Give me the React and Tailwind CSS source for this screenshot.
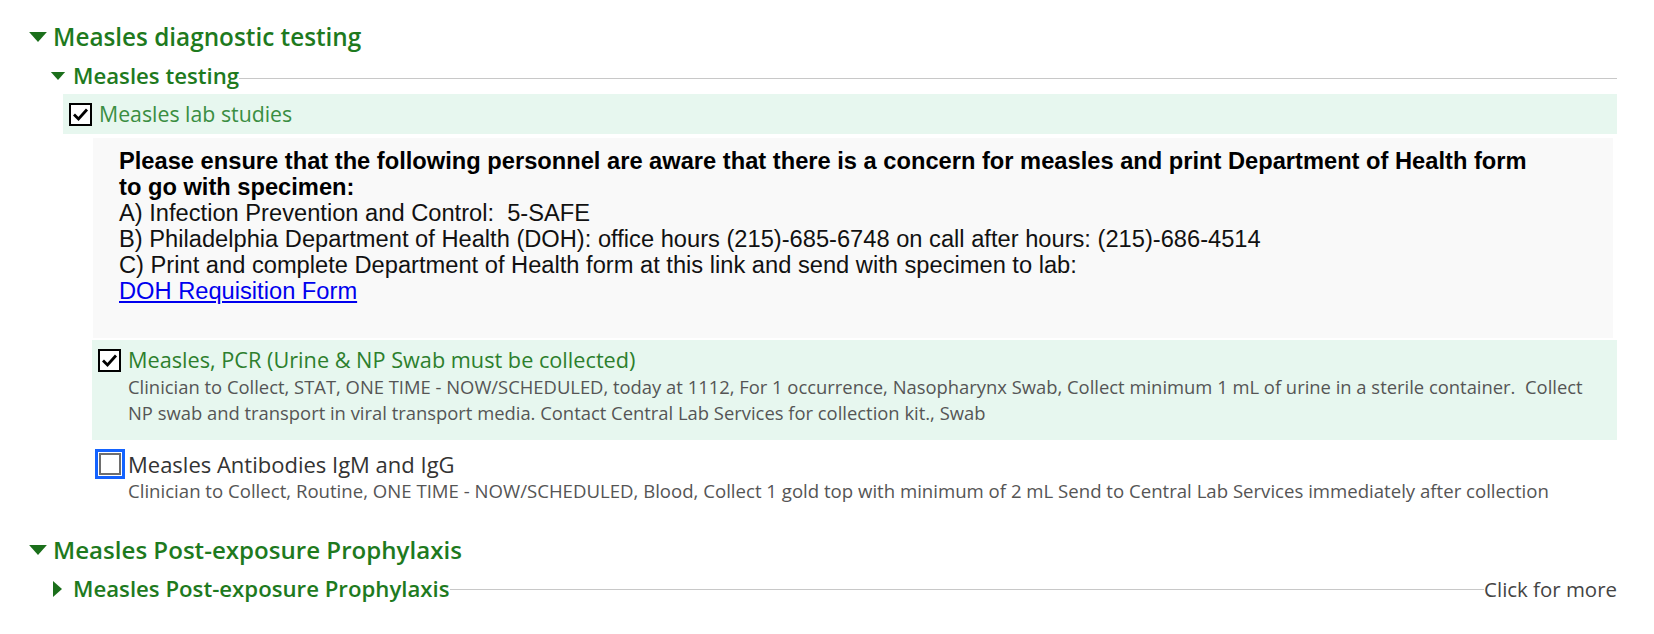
import React from "react";

const sans = { fontFamily: '"Open Sans", "Noto Sans", sans-serif' };
const arial = { fontFamily: '"Liberation Sans", Arial, sans-serif' };

function DownTri({ w, h }) {
  return (
    <svg width={w} height={h} viewBox="0 0 16 9" className="shrink-0">
      <polygon points="0,0 16,0 8,9" fill="#1b6f1b" />
    </svg>
  );
}

function RightTri() {
  return (
    <svg width="9" height="16" viewBox="0 0 9 16" className="shrink-0">
      <polygon points="0,0 9,8 0,16" fill="#1b6f1b" />
    </svg>
  );
}

function CheckBox({ checked }) {
  return (
    <div className="w-[23px] h-[23px] shrink-0 border-2 border-black bg-white flex items-center justify-center">
      {checked && (
        <svg width="17" height="15" viewBox="0 0 17 15">
          <polyline
            points="2,7.5 6.5,12 15,2.5"
            fill="none"
            stroke="#000"
            strokeWidth="2.8"
          />
        </svg>
      )}
    </div>
  );
}

export default function App() {
  return (
    <div
      className="w-[1654px] h-[634px] bg-white pl-[29px] pr-[37px] pt-[21px] overflow-hidden"
      style={sans}
    >
      {/* Level 1 heading */}
      <div className="flex items-center h-[32px]">
        <DownTri w={18} h={10} />
        <span className="ml-[6px] text-[24.3px] leading-[32px] font-semibold text-[#1e7a1e]">
          Measles diagnostic testing
        </span>
      </div>

      {/* Level 2 heading */}
      <div className="mt-[8px] ml-[21px] flex items-start h-[30px]">
        <div className="h-[30px] flex items-center">
          <DownTri w={16} h={8} />
        </div>
        <span className="ml-[7px] text-[22.2px] leading-[30px] font-semibold text-[#1e7a1e] whitespace-nowrap">
          Measles testing
        </span>
        <div className="flex-1 h-px bg-[#c8c8c8] mt-[17px]" />
      </div>

      {/* Measles lab studies row */}
      <div className="mt-[3px] ml-[34px] h-[40px] bg-[#e7f7ef] flex items-center pl-[6px]">
        <CheckBox checked />
        <span className="ml-[7px] text-[21.3px] leading-[28px] text-[#3a8e42]">
          Measles lab studies
        </span>
      </div>

      {/* Info box */}
      <div
        className="mt-[4px] ml-[64px] mr-[4px] h-[200px] bg-[#f9f9f9] pt-[10px] pl-[26px]"
        style={arial}
      >
        <div className="w-[1420px] text-[23.68px] leading-[26px] text-[#111111]">
          <div className="font-bold text-[#000000]">
            Please ensure that the following personnel are aware that there is a
            concern for measles and print Department of Health form to go with
            specimen:
          </div>
          <div className="whitespace-pre-wrap">A) Infection Prevention and Control:  5-SAFE</div>
          <div>
            B) Philadelphia Department of Health (DOH): office hours
            (215)-685-6748 on call after hours: (215)-686-4514
          </div>
          <div>
            C) Print and complete Department of Health form at this link and send
            with specimen to lab:
          </div>
          <div>
            <span className="text-[#0000ee] underline">DOH Requisition Form</span>
          </div>
        </div>
      </div>

      {/* PCR row */}
      <div className="mt-[2px] ml-[63px] bg-[#e7f7ef] pt-[6px] pb-[14px] pl-[6px] pr-[10px]">
        <div className="flex items-center h-[28px]">
          <CheckBox checked />
          <span className="ml-[7px] text-[21.7px] leading-[28px] text-[#2d7f2d]">
            Measles, PCR (Urine &amp; NP Swab must be collected)
          </span>
        </div>
        <div className="pl-[30px] text-[18.4px] leading-[26px] text-[#555555] whitespace-pre-wrap">
          {"Clinician to Collect, STAT, ONE TIME - NOW/SCHEDULED, today at 1112, For 1 occurrence, Nasopharynx Swab, Collect minimum 1 mL of urine in a sterile container.  Collect NP swab and transport in viral transport media. Contact Central Lab Services for collection kit., Swab"}
        </div>
      </div>

      {/* Antibodies row */}
      <div className="pt-[10px] ml-[63px] pl-[3px]">
        <div className="flex items-center h-[28px]">
          <div className="w-[30px] h-[30px] shrink-0 border-[3px] border-[#1463ff] flex items-center justify-center">
            <div className="w-[22px] h-[22px] border-2 border-[#6e6e6e] bg-white" />
          </div>
          <span className="ml-[3px] text-[22px] leading-[28px] text-[#333333]">
            Measles Antibodies IgM and IgG
          </span>
        </div>
        <div className="pl-[33px] text-[18.6px] leading-[26px] text-[#555555]">
          Clinician to Collect, Routine, ONE TIME - NOW/SCHEDULED, Blood, Collect 1
          gold top with minimum of 2 mL Send to Central Lab Services immediately
          after collection
        </div>
      </div>

      {/* Level 1 heading */}
      <div className="mt-[30px] flex items-center h-[32px]">
        <DownTri w={18} h={10} />
        <span className="ml-[6px] text-[24.1px] leading-[32px] font-semibold text-[#1e7a1e]">
          Measles Post-exposure Prophylaxis
        </span>
      </div>

      {/* Level 2 heading closed */}
      <div className="mt-[8px] ml-[24px] flex items-start h-[30px]">
        <div className="h-[30px] flex items-center">
          <RightTri />
        </div>
        <span className="ml-[11px] text-[22.2px] leading-[30px] font-semibold text-[#1e7a1e] whitespace-nowrap">
          Measles Post-exposure Prophylaxis
        </span>
        <div className="flex-1 h-px bg-[#c8c8c8] mt-[15px]" />
        <span className="text-[20.45px] leading-[30px] text-[#444444] whitespace-nowrap">
          Click for more
        </span>
      </div>
    </div>
  );
}
